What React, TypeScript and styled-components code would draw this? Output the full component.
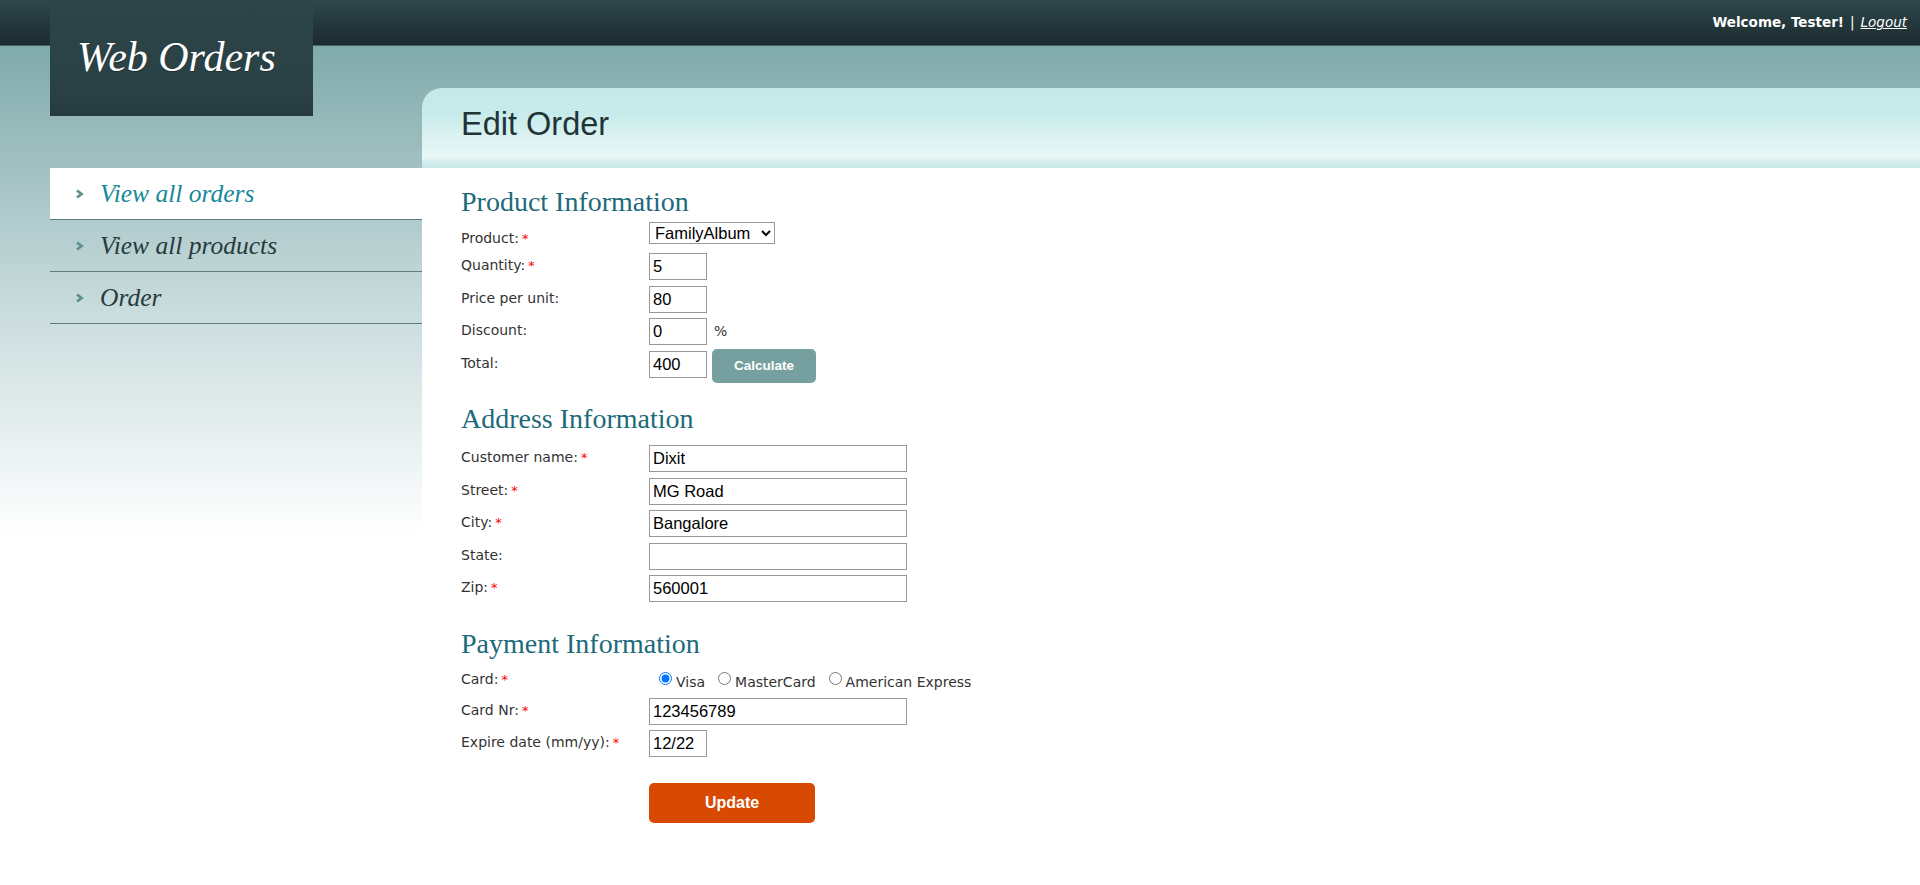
import React from "react";
import styled, { createGlobalStyle } from "styled-components";

const GlobalStyle = createGlobalStyle`
  html, body {
    margin: 0;
    padding: 0;
  }
  body {
    font-family: "DejaVu Sans", Verdana, sans-serif;
    background: #ffffff;
  }
`;

const Page = styled.div`
  display: grid;
  grid-template-columns: 372px 1fr;
  min-height: 100vh;
  padding-left: 50px;
  box-sizing: border-box;
  background:
    linear-gradient(to bottom, #2d474b 0%, #1c2b2f 97%, #5f8587 100%) top left / 100% 46px no-repeat,
    linear-gradient(to bottom, #80aaab 46px, #c7dadb 300px, #ffffff 535px);
`;

const Sidebar = styled.aside`
  display: flex;
  flex-direction: column;
`;

const Logo = styled.div`
  width: 263px;
  height: 116px;
  box-sizing: border-box;
  padding: 33px 0 0 27px;
  background: linear-gradient(to bottom, #2c4549 0%, #2a4145 75%, #253a3e 100%);
  color: #ffffff;
  font-family: "Liberation Serif", Georgia, serif;
  font-style: italic;
  font-size: 42px;
  line-height: 48px;
  text-shadow: 0 1px 1px rgba(0, 0, 0, 0.3);
`;

const Nav = styled.nav`
  margin-top: 52px;
  display: flex;
  flex-direction: column;
`;

const NavItem = styled.a<{ $active?: boolean }>`
  display: flex;
  align-items: center;
  gap: 16px;
  height: 51px;
  padding-left: 25px;
  border-bottom: 1px solid #5f7c7e;
  background: ${(p) => (p.$active ? "#ffffff" : "transparent")};
  color: ${(p) => (p.$active ? "#17899a" : "#263b3e")};
  font-family: "Liberation Serif", Georgia, serif;
  font-style: italic;
  font-size: 25.5px;
  text-decoration: none;
  cursor: pointer;
`;

const Chevron = () => (
  <svg width="9" height="10" viewBox="0 0 9 10">
    <polyline points="2,1.5 6.5,5 2,8.5" fill="none" stroke="#5e8f91" strokeWidth="2.8" />
  </svg>
);

const Main = styled.main`
  display: flex;
  flex-direction: column;
`;

const TopBar = styled.div`
  height: 46px;
  display: flex;
  align-items: center;
  justify-content: flex-end;
  padding: 0 13px 2px 0;
  box-sizing: border-box;
  color: #ffffff;
  font-size: 13.5px;
`;

const Welcome = styled.b`
  font-weight: bold;
`;

const Divider = styled.span`
  margin: 0 6px;
`;

const Logout = styled.a`
  color: #ffffff;
  font-style: italic;
  text-decoration: underline;
`;

const PageHeader = styled.div`
  margin-top: 42px;
  height: 80px;
  box-sizing: border-box;
  padding: 18px 0 0 39px;
  border-top-left-radius: 20px;
  background: linear-gradient(
    to bottom,
    #c4eae8 0%,
    #c6ebea 30%,
    #dcf2f2 62%,
    #e9f7f7 86%,
    #d2ecec 93%,
    #c8e7e7 100%
  );
`;

const Title = styled.h1`
  margin: 0;
  font-family: "Liberation Sans", Arial, sans-serif;
  font-weight: normal;
  font-size: 32.5px;
  line-height: 36px;
  color: #1f3437;
`;

const Panel = styled.div`
  flex: 1;
  background: #ffffff;
  padding: 18px 0 40px 39px;
`;

const SectionTitle = styled.h2<{ $first?: boolean; $tight?: boolean }>`
  margin: ${(p) => (p.$first ? "0" : "20px")} 0 ${(p) => (p.$tight ? 7 : 10)}px;
  font-family: "Liberation Serif", Georgia, serif;
  font-weight: normal;
  font-size: 28px;
  line-height: 32px;
  color: #1d6a7b;
`;

const Row = styled.div<{ $h?: number }>`
  display: grid;
  grid-template-columns: 188px 1fr;
  align-items: start;
  height: ${(p) => p.$h ?? 32.5}px;
`;

const Label = styled.label<{ $pt?: number }>`
  padding-top: ${(p) => p.$pt ?? 4}px;
  font-size: 14px;
  line-height: 16px;
  color: #333333;
`;

const Req = styled.span`
  margin-left: 3px;
  color: #ff0000;
  font-size: 13px;
`;

const Controls = styled.div`
  display: flex;
  align-items: flex-start;
`;

const TextInput = styled.input<{ $wide?: boolean }>`
  width: ${(p) => (p.$wide ? 258 : 58)}px;
  height: 27px;
  box-sizing: border-box;
  padding: 1px 3px;
  margin: 0;
  border: 1px solid #999999;
  border-radius: 0;
  font-family: "Liberation Sans", Arial, sans-serif;
  font-size: 16.5px;
  color: #000000;
  background: #ffffff;
`;

const Select = styled.select`
  width: 126px;
  height: 22px;
  margin-top: -6px;
  box-sizing: border-box;
  padding: 0 0 0 1px;
  border: 1px solid #999999;
  border-radius: 0;
  font-family: "Liberation Sans", Arial, sans-serif;
  font-size: 16.5px;
  color: #000000;
  background: #ffffff;
`;

const Unit = styled.span`
  margin: 5px 0 0 7px;
  font-size: 14px;
  color: #333333;
`;

const Button = styled.button<{ $primary?: boolean }>`
  border: none;
  border-radius: 5px;
  color: #ffffff;
  font-family: "Liberation Sans", Arial, sans-serif;
  font-weight: bold;
  cursor: pointer;
  background: ${(p) => (p.$primary ? "#d84a04" : "#76a09f")};
  width: ${(p) => (p.$primary ? 166 : 104)}px;
  height: ${(p) => (p.$primary ? 40 : 34)}px;
  font-size: ${(p) => (p.$primary ? 16 : 13.5)}px;
`;

const CalcButton = styled(Button)`
  margin: -2px 0 0 5px;
`;

const UpdateButton = styled(Button)`
  margin: 26px 0 0 188px;
`;

const RadioGroup = styled.div`
  display: flex;
  padding: 5px 0 0 5px;
`;

const RadioOption = styled.label`
  display: flex;
  align-items: flex-start;
  margin-right: 8px;
  font-size: 14px;
  line-height: 16px;
  color: #333333;

  input {
    width: 13px;
    height: 13px;
    margin: 0 4px 0 5px;
  }

  span {
    padding-top: 2px;
  }
`;

const Field = ({
  label,
  required,
  h,
  pt,
  children,
}: {
  label: string;
  required?: boolean;
  h?: number;
  pt?: number;
  children: React.ReactNode;
}) => (
  <Row $h={h}>
    <Label $pt={pt}>
      {label}
      {required && <Req>*</Req>}
    </Label>
    <Controls>{children}</Controls>
  </Row>
);

export default function App() {
  return (
    <>
      <GlobalStyle />
      <Page>
        <Sidebar>
          <Logo>Web Orders</Logo>
          <Nav>
            <NavItem $active>
              <Chevron />
              View all orders
            </NavItem>
            <NavItem>
              <Chevron />
              View all products
            </NavItem>
            <NavItem>
              <Chevron />
              Order
            </NavItem>
          </Nav>
        </Sidebar>

        <Main>
          <TopBar>
            <Welcome>Welcome, Tester!</Welcome>
            <Divider>|</Divider>
            <Logout>Logout</Logout>
          </TopBar>
          <PageHeader>
            <Title>Edit Order</Title>
          </PageHeader>

          <Panel>
            <SectionTitle $first>Product Information</SectionTitle>
            <Field label="Product:" required h={25} pt={2}>
              <Select defaultValue="FamilyAlbum">
                <option>MyMoney</option>
                <option>FamilyAlbum</option>
                <option>ScreenSaver</option>
              </Select>
            </Field>
            <Field label="Quantity:" required>
              <TextInput defaultValue="5" />
            </Field>
            <Field label="Price per unit:">
              <TextInput defaultValue="80" />
            </Field>
            <Field label="Discount:">
              <TextInput defaultValue="0" />
              <Unit>%</Unit>
            </Field>
            <Field label="Total:">
              <TextInput defaultValue="400" />
              <CalcButton>Calculate</CalcButton>
            </Field>

            <SectionTitle>Address Information</SectionTitle>
            <Field label="Customer name:" required>
              <TextInput $wide defaultValue="Dixit" />
            </Field>
            <Field label="Street:" required>
              <TextInput $wide defaultValue="MG Road" />
            </Field>
            <Field label="City:" required>
              <TextInput $wide defaultValue="Bangalore" />
            </Field>
            <Field label="State:">
              <TextInput $wide defaultValue="" />
            </Field>
            <Field label="Zip:" required>
              <TextInput $wide defaultValue="560001" />
            </Field>

            <SectionTitle $tight>Payment Information</SectionTitle>
            <Field label="Card:" required h={31}>
              <RadioGroup>
                <RadioOption>
                  <input type="radio" name="card" defaultChecked />
                  <span>Visa</span>
                </RadioOption>
                <RadioOption>
                  <input type="radio" name="card" />
                  <span>MasterCard</span>
                </RadioOption>
                <RadioOption>
                  <input type="radio" name="card" />
                  <span>American Express</span>
                </RadioOption>
              </RadioGroup>
            </Field>
            <Field label="Card Nr:" required h={32}>
              <TextInput $wide defaultValue="123456789" />
            </Field>
            <Field label="Expire date (mm/yy):" required h={27}>
              <TextInput defaultValue="12/22" />
            </Field>

            <UpdateButton $primary>Update</UpdateButton>
          </Panel>
        </Main>
      </Page>
    </>
  );
}
